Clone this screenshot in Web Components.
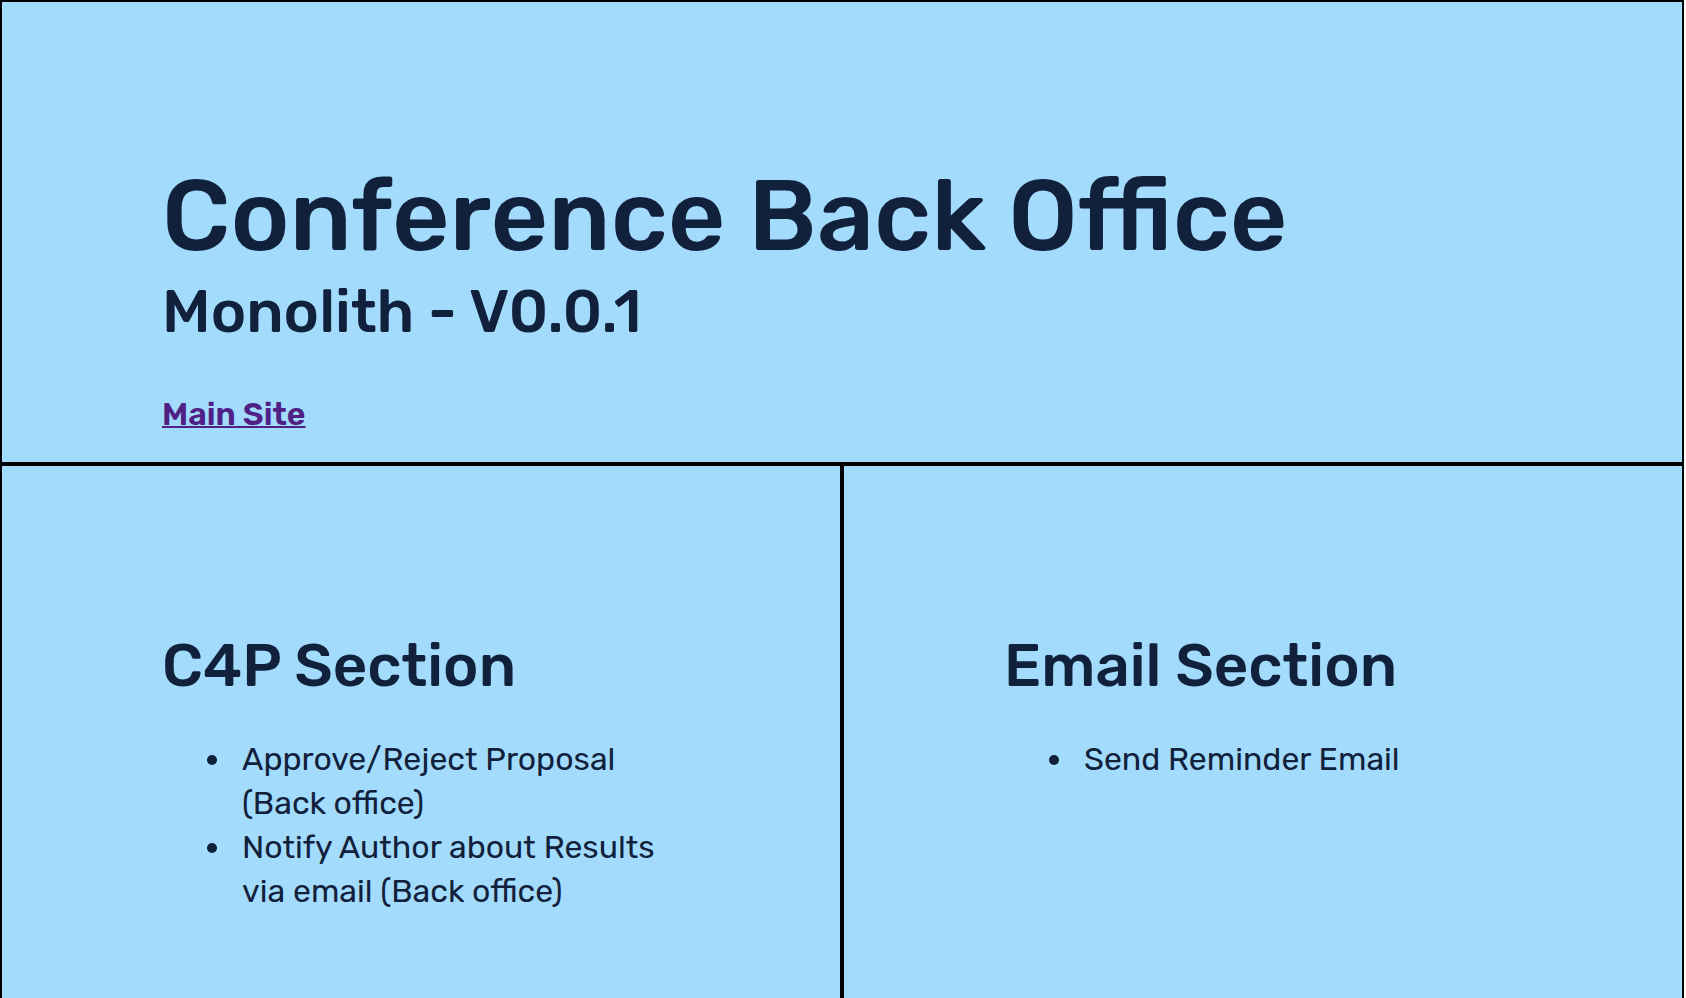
<!DOCTYPE html>
<html lang="en">
<head>
<meta charset="utf-8">
<title>Conference Back Office</title>
<style>
html { background: #fff; }
body { margin: 0 2px 0 0; background: #a2dbfc; color: #11203b; font-family: Rubik, Roboto, "Liberation Sans", sans-serif; }
li { padding-left: 8px; }
</style>
</head>
<body>
<back-office>
  <page-header>
    <span slot="title">Conference Back Office</span>
    <span slot="version">Monolith - V0.0.1</span>
  </page-header>
  <office-section heading="C4P Section">
    <ul>
      <li>Approve/Reject Proposal (Back office)</li>
      <li>Notify Author about Results via email (Back office)</li>
    </ul>
  </office-section>
  <office-section heading="Email Section">
    <ul>
      <li>Send Reminder Email</li>
    </ul>
  </office-section>
</back-office>
<script>
class BackOffice extends HTMLElement {
  constructor() {
    super();
    this.attachShadow({ mode: "open" }).innerHTML = `
      <style>
        :host { display: grid; grid-template-columns: 1fr 1fr; }
        ::slotted(page-header) { grid-column: 1 / -1; }
      </style>
      <slot></slot>`;
  }
}
class PageHeader extends HTMLElement {
  constructor() {
    super();
    this.attachShadow({ mode: "open" }).innerHTML = `
      <style>
        :host { display: block; box-sizing: border-box; border: 2px solid #000; padding: 160px 160px 32px; }
        h1, h2 { margin: 0; font-weight: 500; }
        h1 { font-size: 100px; line-height: 108px; }
        h2 { font-size: 60px; line-height: 84px; }
        nav { margin-top: 44px; font-size: 32px; line-height: 32px; font-weight: 600; }
        a { color: #4f2185; text-decoration: underline; text-decoration-thickness: 2px; }
      </style>
      <h1><slot name="title"></slot></h1>
      <h2><slot name="version"></slot></h2>
      <nav><a href="#">Main Site</a></nav>`;
  }
}
class OfficeSection extends HTMLElement {
  constructor() {
    super();
    this.attachShadow({ mode: "open" }).innerHTML = `
      <style>
        :host { display: block; box-sizing: border-box; border: 2px solid #000; padding: 158px 160px 96px; }
        h2 { margin: 0 0 29px; font-size: 60px; line-height: 84px; font-weight: 500; }
        ::slotted(ul) { margin: 0; padding-left: 72px; font-size: 32px; line-height: 44px; }
      </style>
      <h2></h2>
      <slot></slot>`;
    this.shadowRoot.querySelector("h2").textContent = this.getAttribute("heading");
  }
}
customElements.define("back-office", BackOffice);
customElements.define("page-header", PageHeader);
customElements.define("office-section", OfficeSection);
</script>
</body>
</html>
